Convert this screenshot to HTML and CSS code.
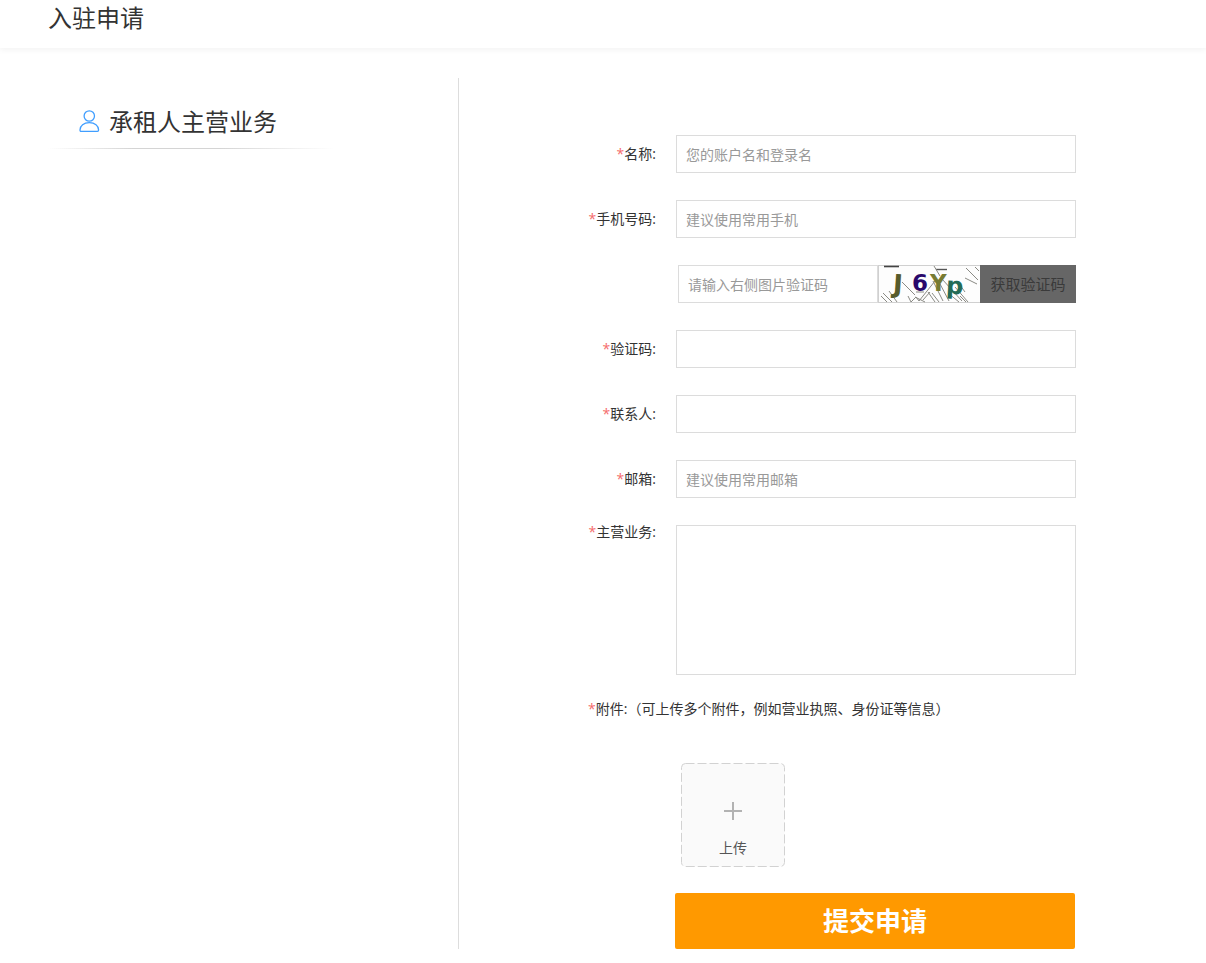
FILE: index.html
```html
<!DOCTYPE html>
<html lang="zh-CN">
<head>
  <meta charset="UTF-8" />
  <meta name="viewport" content="width=device-width, initial-scale=1" />
  <title>入驻申请</title>
  <link rel="stylesheet" href="styles.css">
</head>
<body>

  <!-- Header -->
  <header class="header">
    <h1>入驻申请</h1>
  </header>

  <main class="main">
    <!-- Left side -->
    <aside class="side">
      <h2 class="side-title">
        <svg class="user-icon" width="21" height="24" viewBox="0 0 21 24" fill="none" stroke="#409eff" stroke-width="1.3" aria-hidden="true">
          <circle cx="10.3" cy="6" r="5.2" />
          <path d="M2.2 21.4 C1.3 21.4 1 20.9 1 20 C1 15.6 4.8 12.7 10.3 12.7 C15.8 12.7 19.6 15.6 19.6 20 C19.6 20.9 19.3 21.4 18.4 21.4 Z" />
        </svg>
        <span>承租人主营业务</span>
      </h2>
    </aside>

    <!-- Apply form -->
    <form class="form">
      <div class="row">
        <label class="label" for="name"><i>*</i>名称:</label>
        <input class="field" type="text" id="name" placeholder="您的账户名和登录名" />
      </div>
      <div class="row">
        <label class="label" for="phone"><i>*</i>手机号码:</label>
        <input class="field" type="tel" id="phone" placeholder="建议使用常用手机" />
      </div>
      <div class="row">
        <span class="label"></span>
        <div class="captcha">
          <input class="field" type="text" id="captcha" aria-label="图片验证码" placeholder="请输入右侧图片验证码" />
          <svg class="captcha-img" width="102" height="38" viewBox="0 0 102 38" role="img" aria-label="验证码图片">
            <rect x="0.5" y="0.5" width="102" height="37" fill="#fdfdfd" stroke="#d0d0d0" />
            <g stroke="#8a8a84" stroke-width="1" fill="none">
              <path d="M6 1.5 H21" stroke="#444" stroke-width="1.6" />
              <path d="M58 4.5 H69" stroke="#555" stroke-width="1.4" />
              <path d="M3 31 L9 37 M5 28 L14 37 M11 26 L19 37 M24 17 L37 30 M30 31 L33 37 M37 32 L47 37 M41 36 L57 16 M45 35 L52 27 M50 27 L57 37 M54 28 L61 37 M55 16 L65 36 M61 17 L71 36 M56 1 L62 11 M64 14 L84 36 M70 28 L81 37 M77 22 L90 37 M79 16 L87 27 M82 31 L88 37" />
              <path d="M88 3 L100 15 M87 13 L99 19 M97 2 L101 6" />
              <path d="M33 37 L38 32 L41 36 M38 27 H46" />
            </g>
            <g class="captcha-text">
              <text x="15" y="28" fill="#575b2b" font-size="26" transform="rotate(4 20 20)">J</text>
              <text x="34" y="26" fill="#29086b" font-size="23">6</text>
              <text x="52" y="26" fill="#777b32" font-size="23">Y</text>
              <text x="68" y="29" fill="#236b56" font-size="24" transform="rotate(3 76 22)">p</text>
            </g>
          </svg>
          <button class="code-btn" type="button" disabled>获取验证码</button>
        </div>
      </div>
      <div class="row">
        <label class="label" for="code"><i>*</i>验证码:</label>
        <input class="field" type="text" id="code" />
      </div>
      <div class="row">
        <label class="label" for="contact"><i>*</i>联系人:</label>
        <input class="field" type="text" id="contact" />
      </div>
      <div class="row">
        <label class="label" for="email"><i>*</i>邮箱:</label>
        <input class="field" type="email" id="email" placeholder="建议使用常用邮箱" />
      </div>
      <div class="row row-top">
        <label class="label" for="business"><i>*</i>主营业务:</label>
        <textarea class="field area" id="business"></textarea>
      </div>

      <!-- Attachments -->
      <p class="attach"><i>*</i>附件:（可上传多个附件，例如营业执照、身份证等信息）</p>
      <label class="upload" for="files">
        <input type="file" id="files" multiple />
        <svg class="upload-bg" width="104" height="104" viewBox="0 0 104 104" fill="none" aria-hidden="true">
          <rect x="0.5" y="0.5" width="103" height="103" rx="4" fill="#fafafa" stroke="#d2d2d2" stroke-dasharray="9 3" />
          <path d="M43 48 H61 M52 39 V57" stroke="#b2b2b2" stroke-width="2" />
        </svg>
        <span>上传</span>
      </label>

      <button class="submit" type="submit">提交申请</button>
    </form>
  </main>

</body>
</html>
```
FILE: styles.css
```css
* {
  box-sizing: border-box;
}

body {
  margin: 0;
  font-family: "Open Sans", "Noto Sans CJK SC", sans-serif;
  font-size: 14px;
  line-height: 20px;
  color: #333;
  background: #fff;
}

h1,
h2 {
  margin: 0;
  font-size: 24px;
  font-weight: 400;
  line-height: 36px;
}

i {
  font-style: normal;
  color: #f56c6c;
}

.header {
  height: 48px;
  padding-left: 48px;
  box-shadow: 0 2px 6px rgba(0, 0, 0, 0.05);
}

/* Two columns */
.main {
  display: flex;
  margin: 30px 0 14px;
}

.side {
  flex: 0 0 458px;
  padding: 26px 124px 0 48px;
}

.side-title {
  position: relative;
  display: flex;
  align-items: center;
  gap: 9px;
  height: 45px;
  padding: 0 0 10px 31px;
  white-space: nowrap;
}

.side-title::after {
  content: "";
  position: absolute;
  left: 0;
  right: 0;
  bottom: 0;
  height: 1px;
  background: linear-gradient(to right, transparent, #d4d4d4 30%, #d4d4d4 60%, transparent);
}

.form {
  flex: 1;
  padding-top: 57px;
  border-left: 1px solid #ddd;
}

/* Form rows */
.row {
  display: flex;
  align-items: center;
  gap: 20px;
  margin-bottom: 27px;
}

.row-top {
  align-items: flex-start;
  margin-bottom: 24px;
}

.label {
  flex: 0 0 197px;
  text-align: right;
}

.row-top .label {
  line-height: 14px;
}

.field {
  width: 400px;
  height: 38px;
  padding: 0 9px;
  border: 1px solid #dcdcdc;
  border-radius: 0;
  outline: none;
  background: #fff;
  font: inherit;
  color: #333;
}

.field::placeholder {
  color: #999;
  opacity: 1;
}

.field:focus {
  border-color: #409eff;
}

.area {
  display: block;
  height: 150px;
  padding: 9px;
  resize: none;
}

.captcha {
  display: flex;
  width: 400px;
  padding-left: 2px;
}

.captcha .field {
  flex: 1;
  min-width: 0;
}

.captcha-img {
  display: block;
  flex: none;
}

.captcha-text {
  font-family: "DejaVu Sans", sans-serif;
  font-weight: 700;
}

.code-btn {
  flex: 0 0 96px;
  padding: 0;
  border: none;
  background: #666;
  color: #3a3a3a;
  font: inherit;
  font-size: 15px;
}

/* Attachments */
.attach {
  margin: 0 0 44px 129px;
}

.upload {
  position: relative;
  display: flex;
  align-items: flex-end;
  justify-content: center;
  width: 104px;
  height: 104px;
  margin-left: 222px;
  padding-bottom: 9px;
  color: #555;
  cursor: pointer;
}

.upload input {
  position: absolute;
  width: 1px;
  height: 1px;
  opacity: 0;
}

.upload-bg {
  position: absolute;
  top: 0;
  left: 0;
}

.upload span {
  position: relative;
}

.submit {
  display: block;
  width: 400px;
  height: 56px;
  margin: 26px 0 0 216px;
  padding: 0;
  border: none;
  border-radius: 2px;
  background: #f90;
  color: #fff;
  font: inherit;
  font-size: 26px;
  font-weight: 700;
  cursor: pointer;
}
```
